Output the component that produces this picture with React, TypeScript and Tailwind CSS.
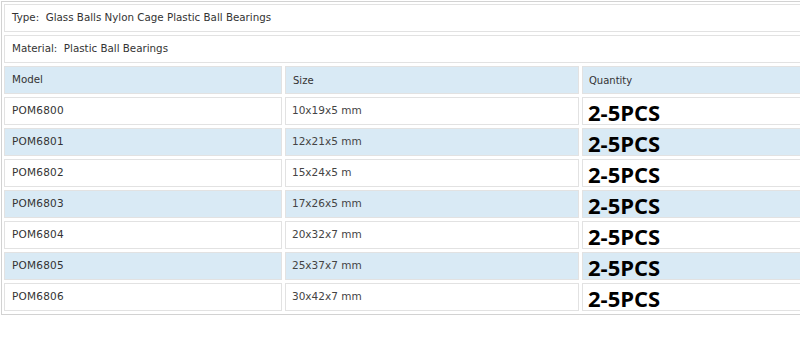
const rows = [
  { model: 'POM6800', size: '10x19x5 mm' },
  { model: 'POM6801', size: '12x21x5 mm' },
  { model: 'POM6802', size: '15x24x5 m' },
  { model: 'POM6803', size: '17x26x5 mm' },
  { model: 'POM6804', size: '20x32x7 mm' },
  { model: 'POM6805', size: '25x37x7 mm' },
  { model: 'POM6806', size: '30x42x7 mm' },
]

const cell = 'h-[28px] border border-[#e2e2e2] flex items-center px-[7px] shrink-0'

export default function App() {
  return (
    <div className="w-[800px] h-[343px] overflow-hidden bg-white text-[#333] font-['DejaVu_Sans',sans-serif] text-[10.3px]">
      <div className="ml-px mt-px w-[840px] border border-[#d2d2d2] px-[2px] pt-[2px] pb-[3px] flex flex-col gap-[3px]">
        <div className={cell + ' bg-white whitespace-pre'}>Type:  Glass Balls Nylon Cage Plastic Ball Bearings</div>
        <div className={cell + ' bg-white whitespace-pre'}>Material:  Plastic Ball Bearings</div>
        <div className="flex gap-[3px]">
          <div className={cell + ' w-[278px] bg-[#d9eaf5]'}>Model</div>
          <div className={cell + ' w-[294px] bg-[#d9eaf5] text-[10px]'}>Size</div>
          <div className={cell + ' flex-1 bg-[#d9eaf5] text-[10px] pl-[6px]'}>Quantity</div>
        </div>
        {rows.map((r, i) => {
          const bg = i % 2 === 1 ? 'bg-[#d9eaf5]' : 'bg-white'
          return (
            <div key={r.model} className="flex gap-[3px]">
              <div className={cell + ' w-[278px] text-[10.5px] tracking-[0.2px] ' + bg}>{r.model}</div>
              <div className={cell + ' w-[294px] text-[10.5px] text-[#444] pl-[6px] ' + bg}>{r.size}</div>
              <div className={cell + ' flex-1 pt-[2px] pl-[5px] ' + bg}>
                <span className="font-['Open_Sans',sans-serif] font-bold text-[22px] text-black leading-none">2-5PCS</span>
              </div>
            </div>
          )
        })}
      </div>
    </div>
  )
}
